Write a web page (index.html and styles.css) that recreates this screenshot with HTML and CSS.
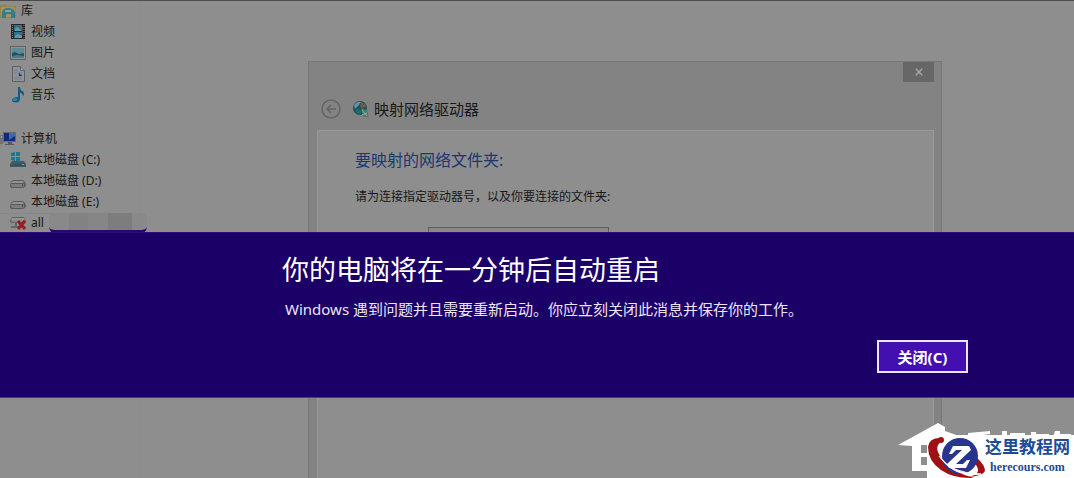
FILE: index.html
```html
<!DOCTYPE html>
<html lang="zh-CN">
<head>
  <meta charset="UTF-8">
  <meta name="viewport" content="width=device-width, initial-scale=1.0">
  <title>映射网络驱动器</title>
  <link rel="stylesheet" href="styles.css">
</head>
<body>
  <div class="desktop">
    <nav class="sidebar">
      <ul class="tree">
        <li class="root">
          <svg class="icon" viewBox="0 0 16 16"><path d="M0 2h6l1 1h9v12H0z" fill="#968346"/><path d="M1 4h14v10H1z" fill="#a39360"/><path d="M2 15V9q1-4 6-4t7 4v6h-4v-4H6v4z" fill="#377b8a"/><path d="M5 7h6v2H5z" fill="#76a9ad"/></svg>
          <span>库</span>
        </li>
        <li>
          <svg class="icon" viewBox="0 0 16 16"><path d="M1 0h14v15H1z" fill="#25292d"/><path d="M4 1h8v6H4zM4 8h8v6H4z" fill="#346f8d"/><path d="M5 5l2-2 4 3v1H5zM5 12l3-2 4 2v2H5z" fill="#5f9bae"/><path d="M2.500 1v14M14 1v14" stroke="#777" stroke-dasharray="1 1"/><path d="M12 3h1v8h-1z" fill="#743a32"/></svg>
          <span>视频</span>
        </li>
        <li>
          <svg class="icon" viewBox="0 0 16 16"><path d="M.5 1.500h15v13H.5z" fill="#939393" stroke="#5c6264"/><path d="M2 3h12v10H2z" fill="#5d8999"/><path d="M2 8l3-1 4 2 5-1v5H2z" fill="#1c5560"/><path d="M2 11l5-1 7 1v2H2z" fill="#477d8b"/></svg>
          <span>图片</span>
        </li>
        <li>
          <svg class="icon" viewBox="0 0 16 16"><path d="M2.500.5h8l4 4v11h-12z" fill="#919498" stroke="#5b5f67"/><path d="M10.500.5v4h4" fill="#a0a0a0" stroke="#5b5f67"/><path d="M4 4h4M4 6h4M4 8h3M4 11h8M4 13h8" stroke="#7b7f88"/><path d="M8 6h4v4H8z" fill="#6e87a4"/><path d="M9 7l3 3H9z" fill="#19355e"/></svg>
          <span>文档</span>
        </li>
        <li>
          <svg class="icon" viewBox="0 0 16 16"><path d="M8 0h2q0 3 3 4.500 2 2 0 5 0-3-3-4v6q0 4-4 4-4 0-4-2.500Q2.500 10 8 10z" fill="#145b88"/><ellipse cx="5" cy="12.500" rx="2.500" ry="1.500" fill="#347da2"/></svg>
          <span>音乐</span>
        </li>
      </ul>
      <ul class="tree">
        <li class="root">
          <svg class="icon" viewBox="0 0 16 16"><path d="M0 4h3v9H0z" fill="#6f7376"/><path d="M1 5h1v2H1z" fill="#aaa"/><path d="M3.500 1.500h12v9h-12z" fill="#142a80" stroke="#666c76"/><path d="M9 2h6v3L9 9z" fill="#4369a6"/><path d="M8 11h4v2H8zM5 13h9v1H5z" fill="#565b63"/></svg>
          <span>计算机</span>
        </li>
        <li>
          <svg class="icon" viewBox="0 0 16 16"><path d="M2 9h12l2 3v3H0v-3z" fill="#49575d"/><path d="M1 12h14v2H1z" fill="#28576b"/><path d="M12 12h2v1h-2z" fill="#6ba6a9"/><path d="M1 1l4-1v4H1zM6 0l4-1v5H6zM1 5h4v4l-4-1zM6 5h4v5L6 9z" fill="#147b9d"/></svg>
          <span>本地磁盘 (C:)</span>
        </li>
        <li>
          <svg class="icon" viewBox="0 0 16 16"><path d="M3 7h10q3 2 3 5-1 3-3 3H2q-2 0-2-3 0-3 3-5z" fill="#585b5b"/><path d="M3 8h10l1 2H1z" fill="#929292"/><path d="M1 11h13v2q-1 1-2 1H3q-2 0-2-3z" fill="#7c7f7e"/><path d="M12 11h1v2h-1z" fill="#315e3a"/></svg>
          <span>本地磁盘 (D:)</span>
        </li>
        <li>
          <svg class="icon" viewBox="0 0 16 16"><path d="M3 7h10q3 2 3 5-1 3-3 3H2q-2 0-2-3 0-3 3-5z" fill="#585b5b"/><path d="M3 8h10l1 2H1z" fill="#929292"/><path d="M1 11h13v2q-1 1-2 1H3q-2 0-2-3z" fill="#7c7f7e"/><path d="M12 11h1v2h-1z" fill="#26703a"/></svg>
          <span>本地磁盘 (E:)</span>
        </li>
        <li class="network-drive">
          <svg class="icon" viewBox="0 0 16 16"><path d="M2 2h12l2 4q0 2-2 2H2Q0 8 0 6z" fill="#606362"/><path d="M2 3h12l1 2H1z" fill="#949494"/><path d="M1 5h12v2H2z" fill="#868887"/><path d="M1 12h8M6 8v4" stroke="#626766" stroke-width="2" fill="none"/><path d="M8 6l7 8M15 6l-7 8" stroke="#9b1c20" stroke-width="3"/></svg>
          <span>all</span>
          <span class="smudge"></span>
        </li>
      </ul>
    </nav>

    <main class="workspace">
      <section class="dialog">
        <div class="dialog-bar">
          <button class="dialog-close" aria-label="关闭窗口">
            <svg viewBox="0 0 10 10"><path d="M1 1l8 8M9 1L1 9" stroke="#a6a6a6" stroke-width="2"/></svg>
          </button>
        </div>
        <header class="dialog-header">
          <button class="back" aria-label="返回">
            <svg viewBox="0 0 20 20" fill="none" stroke="#666"><circle cx="10" cy="10" r="9" stroke-width="1.500"/><path d="M15 10H6M10 6l-4 4 4 4" stroke-width="1.500"/></svg>
          </button>
          <svg class="globe" viewBox="0 0 18 18"><circle cx="8" cy="8" r="7" fill="#164f6d"/><path d="M2 5q3-4 7-3L7 5 5 7 3 9z" fill="#69929c"/><path d="M9 2q5 1 5 5l-4 1-2-2z" fill="#765c34"/><path d="M3 10l4-2 3 4-3 3q-3-1-4-5z" fill="#1d6e54"/><path d="M9 8l6 2 2 7h-6z" fill="#4b7b61"/><path d="M10 10l5 6M10 15l5-2" stroke="#9ca9a0" stroke-width="1"/></svg>
          <h1>映射网络驱动器</h1>
        </header>
        <div class="dialog-body">
          <h2>要映射的网络文件夹:</h2>
          <p>请为连接指定驱动器号，以及你要连接的文件夹:</p>
          <select class="drive" aria-label="驱动器"><option></option></select>
        </div>
      </section>
    </main>
  </div>

  <div class="overlay">
    <section class="banner" role="alertdialog" aria-labelledby="bannerTitle">
      <h2 id="bannerTitle">你的电脑将在一分钟后自动重启</h2>
      <p>Windows 遇到问题并且需要重新启动。你应立刻关闭此消息并保存你的工作。</p>
      <button class="banner-close">关闭(C)</button>
    </section>
  </div>

  <div class="watermark">
    <svg class="house" viewBox="0 0 177 56" fill="#fff">
      <path d="M1 23L41 1l7 4v4l14 5v8H30v27H15V24z"/>
      <path d="M24 23h10v8H24zM24 35h10v8H24z" fill="#8e8e8e"/>
      <path d="M71 11l22-2v3l-14 2H71zM105 9h5v5h-5zM113 11h15v3h-15zM134 10h5v2h13v3h-18zM158 9h5v3h11v3h-18z"/>
    </svg>
    <div class="site">
      <svg class="site-logo" viewBox="0 0 58 43"><path d="M13 3Q2 3 1 12q0 14 13 23 13 9 33 8-20-5-32-19Q6 12 14 7z" fill="#9e1114"/><path d="M50 23q8 7 8 13-2 5-17 6 9-2 10-6 0-5-4-8z" fill="#9e1114"/><circle cx="33" cy="21" r="18" fill="#28358f"/><path d="M12 21q13 18 42 18-27 4-42-18z" fill="#fff" stroke="#fff"/><path d="M26 11h16l2 4-15 14h7l4-4h3l-4 8H22l-2-4 15-14h-6l-4 4h-3z" fill="#fff"/><circle cx="14" cy="5" r="3" fill="#9e1114"/></svg>
      <div class="site-name">
        <strong>这里教程网</strong>
        <span>herecours.com</span>
      </div>
    </div>
  </div>
</body>
</html>
```

FILE: styles.css
```css
* {
  box-sizing: border-box;
}
body {
  margin: 0;
  min-height: 100vh;
  background-color: #8e8e8e;
  font-family: 'Noto Sans', 'Noto Sans CJK SC', sans-serif;
  font-size: 12px;
  color: #171717;
}
h1, h2, p, ul {
  margin: 0;
  padding: 0;
  font-weight: 400;
}
button {
  padding: 0;
  border: none;
  background: none;
  font-family: inherit;
}
.desktop {
  display: flex;
  height: 100vh;
  overflow: hidden;
  border-top: 1px solid #4c4c4c;
}

/* folder tree */
.sidebar {
  display: flex;
  flex-direction: column;
  gap: 23px;
  width: 140px;
  border-right: 1px solid #8b8b8b;
}
.tree {
  list-style: none;
}
.tree li {
  display: flex;
  align-items: center;
  gap: 5px;
  height: 21px;
  padding: 0 0 2px 10px;
  line-height: 18px;
  white-space: nowrap;
}
.tree .root {
  padding-left: 0;
}
.icon {
  flex: none;
  width: 16px;
  height: 16px;
}
.tree .network-drive {
  border-top: 1px solid #868686;
}
.smudge {
  flex: none;
  width: 98px;
  height: 20px;
  border-bottom: 3px solid #26086f;
  border-radius: 6px;
  background: linear-gradient(90deg, #898989 20%, #828282 20% 40%, #868686 40% 60%, #7d7d7d 60% 85%, #898989 85%);
}

/* map drive dialog */
.workspace {
  flex: 1;
  display: flex;
  padding: 60px 132px 0 168px;
}
.dialog {
  flex: 1;
  display: flex;
  flex-direction: column;
  padding: 0 7px 0 8px;
  border: 1px solid #777;
  border-bottom: none;
  background-color: #838383;
}
.dialog-bar {
  display: flex;
  justify-content: flex-end;
}
.dialog-close {
  display: flex;
  align-items: center;
  justify-content: center;
  width: 31px;
  height: 20px;
  background-color: #676767;
}
.dialog-close svg {
  width: 8px;
  height: 8px;
}
.dialog-header {
  display: flex;
  align-items: center;
  height: 48px;
  padding: 5px 4px 0;
}
.back {
  width: 20px;
  height: 20px;
  margin-right: 11px;
}
.back svg {
  display: block;
}
.globe {
  width: 18px;
  height: 18px;
  margin-right: 4px;
}
.dialog-header h1 {
  font-size: 15px;
  line-height: 20px;
}
.dialog-body {
  flex: 1;
  padding: 17px 37px;
  border: 1px solid #989898;
  border-bottom: none;
  background-color: #8e8e8e;
}
.dialog-body h2 {
  margin-bottom: 15px;
  font-size: 16px;
  line-height: 24px;
  color: #1b376f;
}
.dialog-body p {
  line-height: 20px;
}
.drive {
  display: block;
  width: 181px;
  height: 24px;
  margin: 20px 0 0 73px;
  border: 1px solid #5e5e5e;
  background-color: #898989;
  appearance: none;
}

/* restart message */
.overlay {
  position: absolute;
  inset: 0;
  padding-top: 232px;
}
.banner {
  display: flex;
  flex-direction: column;
  padding: 20px 106px 24px 282px;
  border-top: 1px solid #310b78;
  border-bottom: 1px solid #4c3b83;
  background-color: #1b0067;
  color: #fff;
}
.banner h2 {
  font-size: 27px;
  line-height: 34px;
}
.banner p {
  margin: 10px 0 19px 3px;
  font-size: 15px;
  line-height: 24px;
  color: #ece5f8;
}
.banner-close {
  align-self: flex-end;
  width: 91px;
  height: 33px;
  border: 2px solid #eee5fc;
  background-color: #4210b0;
  font-size: 15px;
  font-weight: 700;
  line-height: 20px;
  color: #fff;
}

/* site mark in the corner */
.watermark {
  position: fixed;
  right: 0;
  bottom: 0;
}
.house {
  position: absolute;
  right: 0;
  bottom: 0;
  width: 177px;
  height: 56px;
}
.site {
  position: relative;
  display: flex;
  width: 147px;
  height: 43px;
  background-color: #fff;
}
.site-logo {
  flex: none;
  width: 58px;
  height: 43px;
  overflow: visible;
}
.site-name {
  display: flex;
  flex-direction: column;
  align-items: center;
  white-space: nowrap;
  color: #1b4c94;
}
.site-name strong {
  font-family: 'Liberation Serif', 'Noto Sans CJK SC', serif;
  font-size: 17px;
  line-height: 26px;
}
.site-name span {
  font-family: 'Liberation Serif', serif;
  font-size: 12px;
  font-weight: 700;
  line-height: 12px;
}
```
